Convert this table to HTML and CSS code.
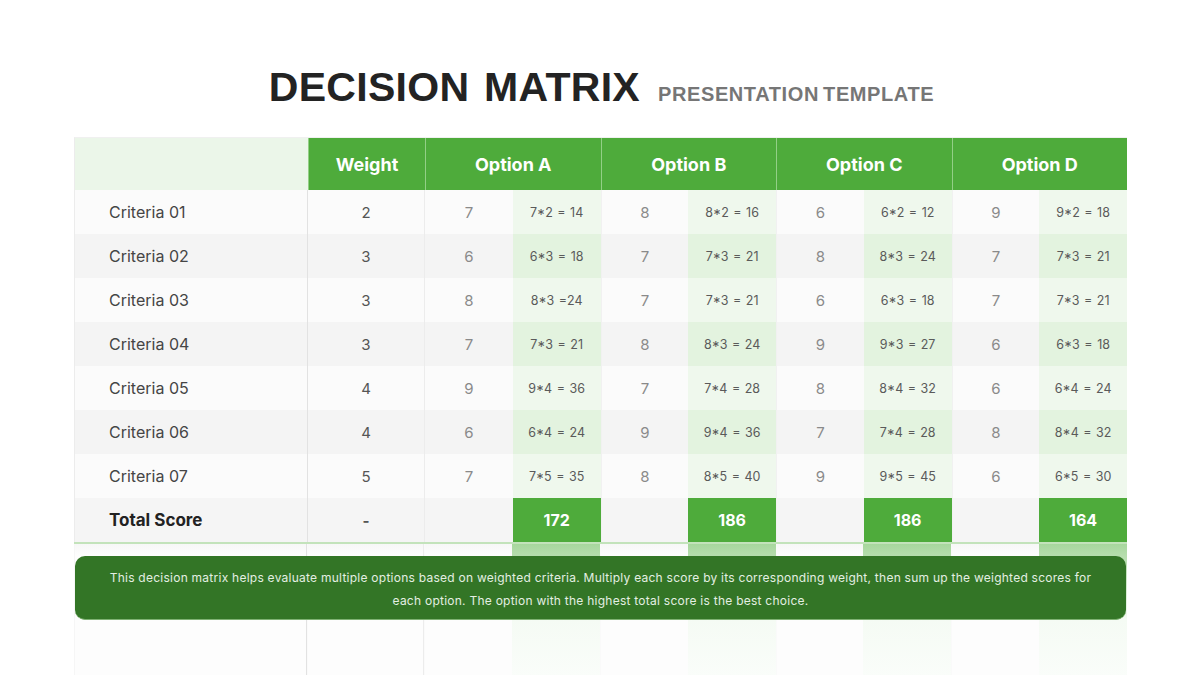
FILE: index.html
```html
<!DOCTYPE html>
<html lang="en">
<head>
<meta charset="utf-8">
<title>Decision Matrix</title>
<link rel="stylesheet" href="styles.css">
</head>
<body>
<div class="page">
  <h1 class="title"><span class="main">DECISION MATRIX</span><span class="sub">PRESENTATION TEMPLATE</span></h1>
  <div class="matrix">
    <div class="hd blank"></div>
    <div class="hd green">Weight</div>
    <div class="hd green span2">Option A</div>
    <div class="hd green span2">Option B</div>
    <div class="hd green span2">Option C</div>
    <div class="hd green span2 last">Option D</div>

    <div class="c name r1">Criteria 01</div><div class="c w r1">2</div>
    <div class="c s r1 gs">7</div><div class="c x r1">7*2 = 14</div>
    <div class="c s r1 gs">8</div><div class="c x r1">8*2 = 16</div>
    <div class="c s r1 gs">6</div><div class="c x r1">6*2 = 12</div>
    <div class="c s r1 gs">9</div><div class="c x r1">9*2 = 18</div>

    <div class="c name r2">Criteria 02</div><div class="c w r2">3</div>
    <div class="c s r2 gs">6</div><div class="c x r2">6*3 = 18</div>
    <div class="c s r2 gs">7</div><div class="c x r2">7*3 = 21</div>
    <div class="c s r2 gs">8</div><div class="c x r2">8*3 = 24</div>
    <div class="c s r2 gs">7</div><div class="c x r2">7*3 = 21</div>

    <div class="c name r1">Criteria 03</div><div class="c w r1">3</div>
    <div class="c s r1 gs">8</div><div class="c x r1">8*3 =24</div>
    <div class="c s r1 gs">7</div><div class="c x r1">7*3 = 21</div>
    <div class="c s r1 gs">6</div><div class="c x r1">6*3 = 18</div>
    <div class="c s r1 gs">7</div><div class="c x r1">7*3 = 21</div>

    <div class="c name r2">Criteria 04</div><div class="c w r2">3</div>
    <div class="c s r2 gs">7</div><div class="c x r2">7*3 = 21</div>
    <div class="c s r2 gs">8</div><div class="c x r2">8*3 = 24</div>
    <div class="c s r2 gs">9</div><div class="c x r2">9*3 = 27</div>
    <div class="c s r2 gs">6</div><div class="c x r2">6*3 = 18</div>

    <div class="c name r1">Criteria 05</div><div class="c w r1">4</div>
    <div class="c s r1 gs">9</div><div class="c x r1">9*4 = 36</div>
    <div class="c s r1 gs">7</div><div class="c x r1">7*4 = 28</div>
    <div class="c s r1 gs">8</div><div class="c x r1">8*4 = 32</div>
    <div class="c s r1 gs">6</div><div class="c x r1">6*4 = 24</div>

    <div class="c name r2">Criteria 06</div><div class="c w r2">4</div>
    <div class="c s r2 gs">6</div><div class="c x r2">6*4 = 24</div>
    <div class="c s r2 gs">9</div><div class="c x r2">9*4 = 36</div>
    <div class="c s r2 gs">7</div><div class="c x r2">7*4 = 28</div>
    <div class="c s r2 gs">8</div><div class="c x r2">8*4 = 32</div>

    <div class="c name r1">Criteria 07</div><div class="c w r1">5</div>
    <div class="c s r1 gs">7</div><div class="c x r1">7*5 = 35</div>
    <div class="c s r1 gs">8</div><div class="c x r1">8*5 = 40</div>
    <div class="c s r1 gs">9</div><div class="c x r1">9*5 = 45</div>
    <div class="c s r1 gs">6</div><div class="c x r1">6*5 = 30</div>

    <div class="c name tot">Total Score</div><div class="c w tot dash">-</div>
    <div class="c tot gs"></div><div class="c total">172</div>
    <div class="c tot gs"></div><div class="c total">186</div>
    <div class="c tot gs"></div><div class="c total">186</div>
    <div class="c tot gs"></div><div class="c total">164</div>
  </div>
  <div class="reflection">
    <div class="rf name"></div><div class="rf w"></div>
    <div class="rf gs"></div><div class="rf g"></div>
    <div class="rf gs"></div><div class="rf g"></div>
    <div class="rf gs"></div><div class="rf g"></div>
    <div class="rf gs"></div><div class="rf g"></div>
    <div class="note">This decision matrix helps evaluate multiple options based on weighted criteria. Multiply each score by its corresponding weight, then sum up the weighted scores for each option. The option with the highest total score is the best choice.</div>
  </div>
</div>
</body>
</html>
```

FILE: styles.css
```css
* { box-sizing: border-box; }
html, body { margin: 0; padding: 0; background: #ffffff; }
body { font-family: Inter, "Noto Sans", sans-serif; overflow: hidden; }

.page {
  width: 1200px;
  height: 675px;
  padding: 67px 73px 0 74px;
}

.title {
  margin: 0 0 29px 0;
  display: flex;
  justify-content: center;
  align-items: baseline;
  gap: 18px;
  font-family: "Liberation Sans", Arial, sans-serif;
  font-weight: 700;
  line-height: 1;
  padding-left: 2px;
}
.title .main { font-size: 41px; color: #232323; word-spacing: 3px; letter-spacing: 0.3px; }
.title .sub { font-size: 20px; color: #767676; letter-spacing: 0.6px; word-spacing: -2px; }

.matrix {
  display: grid;
  grid-template-columns: 233px 117px repeat(8, 1fr);
  grid-template-rows: 52px repeat(8, 44px);
  border-left: 1px solid #ececec;
  border-top: 1px solid #f0f0f0;
}

.hd {
  display: flex;
  align-items: center;
  justify-content: center;
  font-size: 18px;
  font-weight: 700;
  color: #ffffff;
}
.hd.blank { background: #ebf6e9; }
.hd.green { background: #4eab3b; border-left: 1px solid #93cf86; }
.hd.span2 { grid-column: span 2; }

.c {
  display: flex;
  align-items: center;
  justify-content: center;
}
.r1 { background: #fbfbfb; }
.r2 { background: #f4f4f4; }
.tot { background: #f5f5f5; }

.name {
  justify-content: flex-start;
  padding-left: 34px;
  font-size: 16px;
  color: #454545;
  border-right: 1px solid #e2e2e2;
}
.name.tot { font-weight: 700; font-size: 17px; color: #222; }

.w { font-size: 15px; color: #555; border-right: 1px solid #ececec; }
.dash { font-weight: 700; }
.s { font-size: 15px; color: #8a8a8a; }
.gs { border-left: 1px solid #f1f1f1; }
.matrix .w + .gs { border-left: none; }

.x { font-size: 12.5px; color: #5a5a5a; word-spacing: 1px; }
.x.r1 { background: #eff8ed; }
.x.r2 { background: #e3f3df; }

.total {
  background: #4eab3b;
  color: #ffffff;
  font-weight: 700;
  font-size: 16px;
}

.reflection {
  position: relative;
  display: grid;
  grid-template-columns: 233px 117px repeat(8, 1fr);
  height: 135px;
  border-top: 2px solid #c3e3bb;
  box-shadow: inset 0 3px 3px -2px rgba(0, 0, 0, 0.12);
}
.rf {
  background: linear-gradient(#f7f7f7 0, #fdfdfd 12px, #fdfdfd 100%);
  border-left: 1px solid #fafafa;
}
.rf.name { border-left: 1px solid #f6f6f6; }
.rf.g {
  background: linear-gradient(#a7d79d 0, #b4dcab 10px, #f5fbf4 76px, #fafdfa 100%);
  border-left: none;
}

.note {
  position: absolute;
  left: 1px;
  right: 1px;
  top: 12px;
  height: 64px;
  background: #337526;
  border-radius: 10px;
  border-bottom: 1px solid #7fb273;
  color: #e4efe2;
  font-size: 12px;
  letter-spacing: 0.25px;
  line-height: 23px;
  text-align: center;
  padding: 10px 28px 0;
}
```
